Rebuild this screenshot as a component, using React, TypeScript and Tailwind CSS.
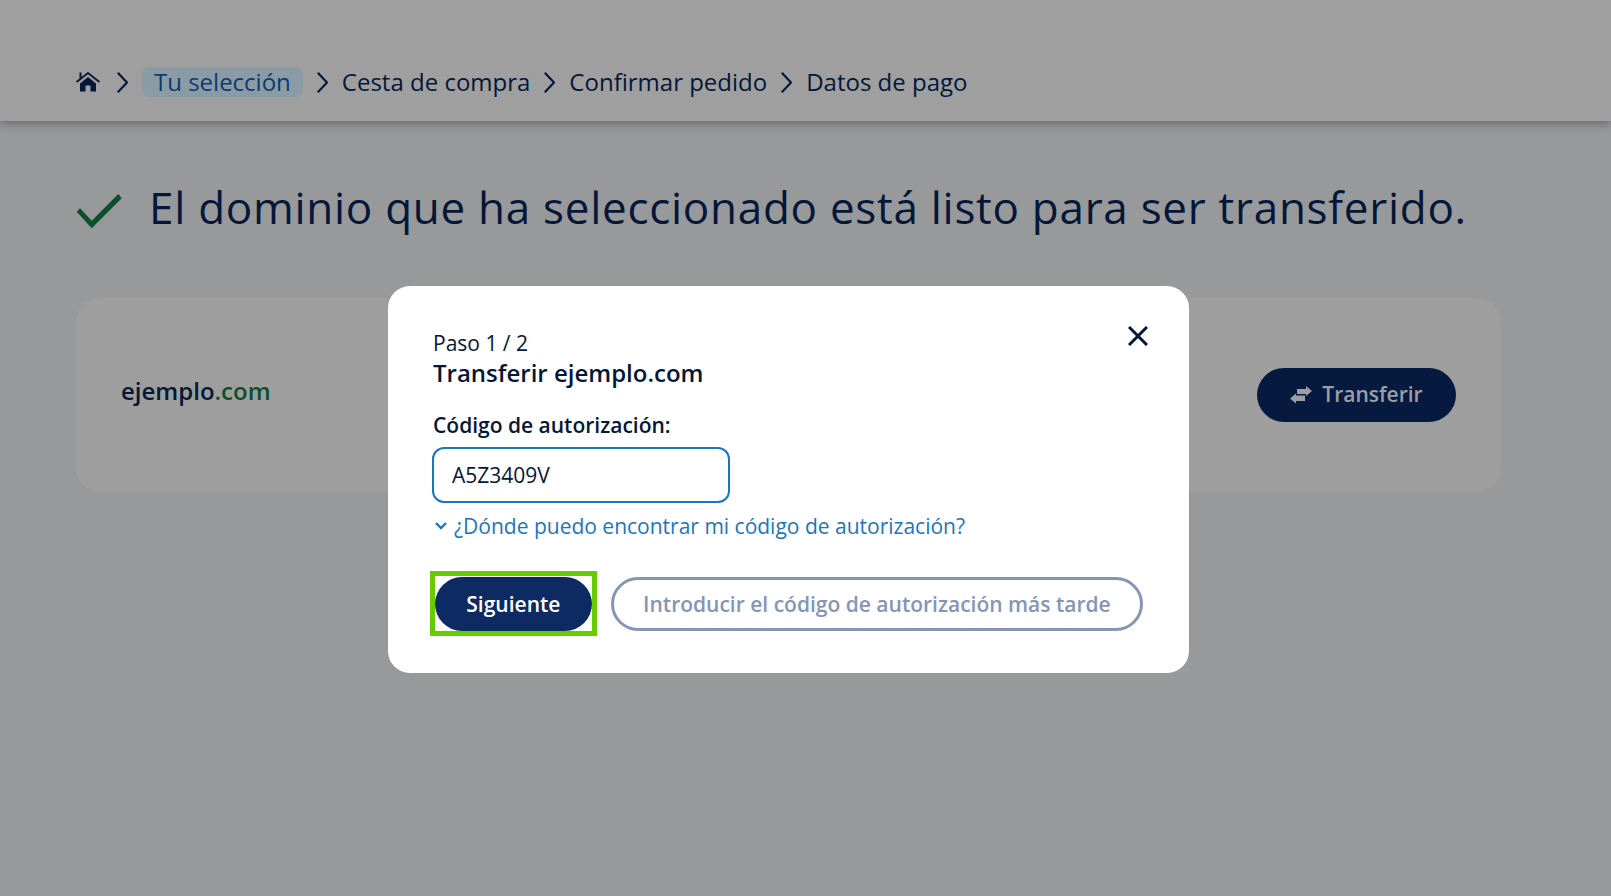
function Sep() {
  return (
    <svg width="11" height="21" viewBox="0 0 11 21" className="shrink-0 text-[#051738]" fill="none" stroke="currentColor" strokeWidth="2.2">
      <path d="M0.8 0.8 L10 10.5 L0.8 20.2" />
    </svg>
  );
}

export default function App() {
  return (
    <div className="relative h-[896px] w-full overflow-hidden bg-[#98999b] font-['Open_Sans',sans-serif] text-[#051738]">
      <header className="flex h-[121px] items-center gap-[14px] bg-[#9f9f9f] pl-[76px] pt-[43px] text-[24px] shadow-[0_2px_10px_rgba(30,30,50,0.45)]">
        <svg width="24" height="20" viewBox="0 0 24 20" className="mr-[3px] shrink-0" fill="#051738">
          <path d="M0.5 10 L12 1 L23.5 10" fill="none" stroke="#051738" strokeWidth="1.8" />
          <rect x="3.5" y="0.5" width="2" height="6" />
          <path d="M12 5 L4 11.5 V19.5 H9.5 V13.5 H14.5 V19.5 H20 V11.5 Z" />
        </svg>
        <Sep />
        <span className="rounded-[8px] bg-[#8a9ba6] px-[12px] leading-[30px] text-[#0f3a6e]">Tu selección</span>
        <Sep />
        <span>Cesta de compra</span>
        <Sep />
        <span>Confirmar pedido</span>
        <Sep />
        <span>Datos de pago</span>
      </header>

      <main className="pl-[76px] pr-[110px]">
        <div className="flex h-[177px] items-center gap-[27px] pb-[3px]">
          <svg width="46" height="35" viewBox="0 0 46 35" className="mt-[6px] shrink-0" fill="#0c4f2c">
            <path d="M0.7 17.7 L4 14.3 L15.7 26.7 L42.3 0 L45.7 4.3 L15.7 34.3 Z" />
          </svg>
          <h1 className="-mt-[2px] whitespace-nowrap text-[44px] font-medium leading-[56px] tracking-[0.72px]">El dominio que ha seleccionado está listo para ser transferido.</h1>
        </div>

        <section className="flex h-[194px] items-start justify-between rounded-[24px] bg-[#9e9e9e] pl-[45px] pr-[45px]">
          <div className="pt-[75px] text-[24px] font-semibold leading-[36px]">
            ejemplo<span className="text-[#0c4f2c]">.com</span>
          </div>
          <button className="mt-[70px] flex h-[54px] w-[199px] items-center justify-center gap-[10px] rounded-full bg-[#061a3f] text-[21px] font-semibold text-[#9b9fa5]">
            <svg width="22" height="18" viewBox="0 0 22 18" fill="currentColor">
              <path d="M7 3 H16 V0 L22 5 L16 10 V8 H7 Z" />
              <path d="M15 9.5 H6 V7.5 L0 12.5 L6 17.5 V15 H15 Z" />
            </svg>
            Transferir
          </button>
        </section>
      </main>

      <div className="absolute left-[388px] top-[286px] h-[387px] w-[801px] rounded-[22px] bg-white pl-[45px] pr-[46px] pt-[44px]">
        <svg width="20" height="20" viewBox="0 0 20 20" className="absolute right-[41px] top-[40px]" fill="none" stroke="#051738" strokeWidth="3">
          <path d="M1 1 L19 19 M19 1 L1 19" />
        </svg>
        <p className="text-[21px] leading-[27px]">Paso 1 / 2</p>
        <h2 className="text-[24px] font-semibold leading-[32px]">Transferir ejemplo.com</h2>
        <label className="mt-[21px] block text-[21px] font-semibold leading-[30px]">Código de autorización:</label>
        <div className="-ml-[1px] mt-[7px] flex h-[56px] w-[298px] items-center rounded-[12px] border-2 border-[#1b75bc] pl-[18px] pt-[2px] text-[21px]">A5Z3409V</div>
        <div className="mt-[8px] flex items-center gap-[7px] text-[21px] leading-[30px] text-[#1b75bc]">
          <svg width="12" height="8" viewBox="0 0 12 8" className="ml-[2px]" fill="none" stroke="currentColor" strokeWidth="2.4">
            <path d="M1 1 L6 6 L11 1" />
          </svg>
          ¿Dónde puedo encontrar mi código de autorización?
        </div>
        <div className="ml-[1.5px] mt-[36px] flex items-center gap-[18.5px]">
          <div className="relative h-[54px] w-[158px]">
            <span className="absolute -inset-x-[4.5px] -bottom-[5px] -top-[6px] border-[5px] border-[#66cc00]"></span>
            <button className="relative flex h-full w-full items-center justify-center rounded-full bg-[#0d2a63] pt-[2px] text-[21px] font-semibold text-white">Siguiente</button>
          </div>
          <button className="flex h-[54px] w-[533px] items-center justify-center rounded-full border-[3px] border-[#8595b5] pt-[2px] text-[21px] font-semibold text-[#8595b5]">Introducir el código de autorización más tarde</button>
        </div>
      </div>
    </div>
  );
}
